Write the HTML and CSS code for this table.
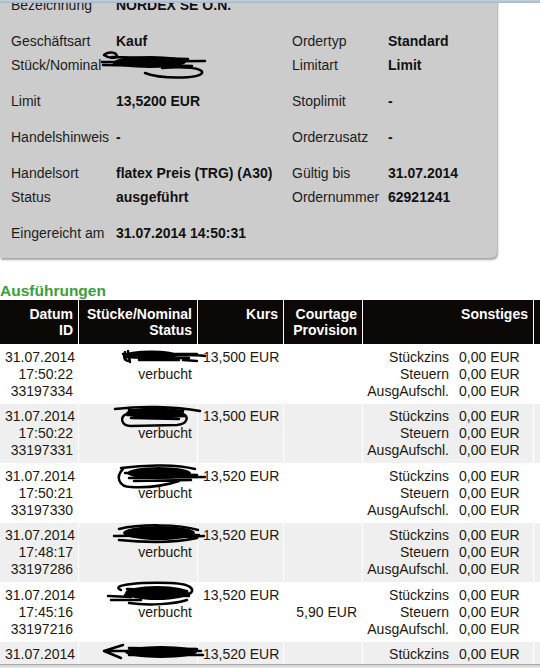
FILE: index.html
```html
<!DOCTYPE html>
<html lang="de">
<head>
<meta charset="utf-8">
<title>Order</title>
<link rel="stylesheet" href="styles.css">
</head>
<body>
<div class="topstrip"></div>

<div class="order">
  <div class="grp">
    <div class="lbl">Bezeichnung</div><div class="val wide">NORDEX SE O.N.</div>
  </div>
  <div class="grp">
    <div class="lbl">Geschäftsart</div><div class="val">Kauf</div>
    <div class="lbl">Ordertyp</div><div class="val">Standard</div>
    <div class="lbl">Stück/Nominal</div>
    <div class="val redacted">
      <svg class="scrib box-scrib" viewBox="0 0 110 36">
        <ellipse class="blob" cx="50" cy="14" rx="36" ry="6"/>
        <path d="M4 7 C 8 3, 16 4, 17 8 C 16 11, 8 10, 4 7 M2 14 L 105 13 M3 17 L 60 18 M12 9 L 88 11 L 14 16 L 92 18 M45 25 C 60 31, 98 31, 102 25 C 104 20, 84 18, 62 20"/>
      </svg>
    </div>
    <div class="lbl">Limitart</div><div class="val">Limit</div>
  </div>
  <div class="grp">
    <div class="lbl">Limit</div><div class="val">13,5200 EUR</div>
    <div class="lbl">Stoplimit</div><div class="val">-</div>
  </div>
  <div class="grp">
    <div class="lbl">Handelshinweis</div><div class="val">-</div>
    <div class="lbl">Orderzusatz</div><div class="val">-</div>
  </div>
  <div class="grp">
    <div class="lbl">Handelsort</div><div class="val">flatex Preis (TRG) (A30)</div>
    <div class="lbl">Gültig bis</div><div class="val">31.07.2014</div>
    <div class="lbl">Status</div><div class="val">ausgeführt</div>
    <div class="lbl">Ordernummer</div><div class="val">62921241</div>
  </div>
  <div class="grp">
    <div class="lbl">Eingereicht am</div><div class="val wide">31.07.2014 14:50:31</div>
  </div>
</div>

<h2 class="section">Ausführungen</h2>

<table class="exec">
  <colgroup>
    <col class="c-date"><col class="c-pcs"><col class="c-kurs"><col class="c-court"><col class="c-fees"><col class="c-more">
  </colgroup>
  <thead>
    <tr>
      <th>Datum<br>ID</th>
      <th>Stücke/Nominal<br>Status</th>
      <th>Kurs</th>
      <th>Courtage<br>Provision</th>
      <th>Sonstiges</th>
      <th></th>
    </tr>
  </thead>
  <tbody>
    <tr>
      <td>31.07.2014<br>17:50:22<br>33197334</td>
      <td class="pcs">&nbsp;<br>verbucht
        <svg class="scrib" viewBox="0 0 130 60">
          <ellipse class="blob" cx="72" cy="11" rx="26" ry="4.5"/>
          <path d="M46 8 C 44 12, 45 17, 50 17 M49 7 L 51 18 M44 10 L 118 10 L 46 13 L 110 14 M60 16 L 100 16 M100 11 C 110 11, 120 11, 126 12 M104 16 L 118 17"/>
        </svg>
      </td>
      <td>13,500 EUR</td>
      <td></td>
      <td class="fees"><div class="fgrid"><span>Stückzins</span><span>0,00 EUR</span><span>Steuern</span><span>0,00 EUR</span><span>AusgAufschl.</span><span>0,00 EUR</span></div></td>
      <td></td>
    </tr>
    <tr>
      <td>31.07.2014<br>17:50:22<br>33197331</td>
      <td class="pcs">&nbsp;<br>verbucht
        <svg class="scrib" viewBox="0 0 130 60">
          <ellipse class="blob" cx="76" cy="9" rx="29" ry="5.5"/>
          <path d="M36 5 C 60 2, 95 2, 121 7 M48 10 C 40 12, 42 22, 52 22 L 98 21 C 109 20, 110 12, 104 10 M50 6 L 104 7 L 48 11 L 106 12 L 52 14 L 100 15"/>
        </svg>
      </td>
      <td>13,500 EUR</td>
      <td></td>
      <td class="fees"><div class="fgrid"><span>Stückzins</span><span>0,00 EUR</span><span>Steuern</span><span>0,00 EUR</span><span>AusgAufschl.</span><span>0,00 EUR</span></div></td>
      <td></td>
    </tr>
    <tr>
      <td>31.07.2014<br>17:50:21<br>33197330</td>
      <td class="pcs">&nbsp;<br>verbucht
        <svg class="scrib" viewBox="0 0 130 60">
          <ellipse class="blob" cx="80" cy="10" rx="32" ry="6"/>
          <path d="M42 5 C 70 1, 100 2, 116 6 M44 6 C 36 14, 40 24, 52 24 C 70 25, 88 22, 100 18 M46 10 L 118 12 L 50 15 L 126 14 M55 18 L 112 17"/>
        </svg>
      </td>
      <td>13,520 EUR</td>
      <td></td>
      <td class="fees"><div class="fgrid"><span>Stückzins</span><span>0,00 EUR</span><span>Steuern</span><span>0,00 EUR</span><span>AusgAufschl.</span><span>0,00 EUR</span></div></td>
      <td></td>
    </tr>
    <tr>
      <td>31.07.2014<br>17:48:17<br>33197286</td>
      <td class="pcs">&nbsp;<br>verbucht
        <svg class="scrib" viewBox="0 0 130 60">
          <ellipse class="blob" cx="80" cy="10" rx="36" ry="7"/>
          <path d="M40 6 C 60 1, 100 1, 119 7 M35 13 L 120 12 M40 17 C 70 20, 100 19, 118 15 M100 14 L 125 13"/>
        </svg>
      </td>
      <td>13,520 EUR</td>
      <td></td>
      <td class="fees"><div class="fgrid"><span>Stückzins</span><span>0,00 EUR</span><span>Steuern</span><span>0,00 EUR</span><span>AusgAufschl.</span><span>0,00 EUR</span></div></td>
      <td></td>
    </tr>
    <tr>
      <td>31.07.2014<br>17:45:16<br>33197216</td>
      <td class="pcs">&nbsp;<br>verbucht
        <svg class="scrib" viewBox="0 0 130 60">
          <ellipse class="blob" cx="78" cy="11" rx="32" ry="7"/>
          <path d="M42 8 C 30 3, 60 0, 92 1 C 116 2, 118 10, 106 14 M29 14 L 52 15 M32 18 L 62 18 M50 21 C 70 24, 95 22, 108 18 M48 7 L 108 9 L 46 13 L 110 14"/>
        </svg>
      </td>
      <td>13,520 EUR</td>
      <td><br>5,90 EUR</td>
      <td class="fees"><div class="fgrid"><span>Stückzins</span><span>0,00 EUR</span><span>Steuern</span><span>0,00 EUR</span><span>AusgAufschl.</span><span>0,00 EUR</span></div></td>
      <td></td>
    </tr>
    <tr>
      <td>31.07.2014<br>17:45:16<br>33197215</td>
      <td class="pcs">&nbsp;<br>verbucht
        <svg class="scrib" viewBox="0 0 130 60">
          <ellipse class="blob" cx="82" cy="10" rx="36" ry="6"/>
          <path d="M25 9 L 44 3 M25 9 L 42 16 M25 9 L 122 9 M50 6 L 118 7 M50 13 L 124 13"/>
        </svg>
      </td>
      <td>13,520 EUR</td>
      <td></td>
      <td class="fees"><div class="fgrid"><span>Stückzins</span><span>0,00 EUR</span><span>Steuern</span><span>0,00 EUR</span><span>AusgAufschl.</span><span>0,00 EUR</span></div></td>
      <td></td>
    </tr>
  </tbody>
</table>

<div class="bottombar"></div>
</body>
</html>
```

FILE: styles.css
```css
html, body {
  margin: 0;
  padding: 0;
  overflow: hidden;
  background: #ffffff;
}

body {
  font-family: "Liberation Sans", Arial, sans-serif;
  font-size: 14px;
  color: #1c1c1c;
}

.topstrip {
  position: fixed;
  top: 0;
  left: 0;
  right: 0;
  height: 3px;
  background: linear-gradient(#c6d2dd, #a3b4c4);
  z-index: 10;
}

.bottombar {
  position: fixed;
  bottom: 0;
  left: 0;
  right: 0;
  height: 4px;
  background: linear-gradient(#8e8e8e, #d4d4d4 35%, #e6e6e6);
  z-index: 10;
}

/* order details box */
.order {
  box-sizing: border-box;
  width: 497px;
  margin-top: -7px;
  padding: 0 0 13px 11px;
  background: #cccccc;
  border-radius: 0 0 6px 0;
  box-shadow: 1px 2px 2px rgba(0, 0, 0, 0.35);
  display: flex;
  flex-direction: column;
  gap: 12px;
}

.grp {
  display: grid;
  grid-template-columns: 105px 176px 96px auto;
  grid-auto-rows: 24px;
  line-height: 24px;
  white-space: nowrap;
}

.lbl {
  color: #1c1c1c;
}

.val {
  font-weight: bold;
  color: #111111;
}

.val.wide {
  grid-column: 2 / span 3;
}

.redacted {
  position: relative;
}

.scrib {
  position: absolute;
  left: 0;
  top: 0;
  width: 130px;
  height: 60px;
  overflow: visible;
  fill: none;
  stroke: #000000;
  stroke-width: 2.5;
  stroke-linecap: round;
  stroke-linejoin: round;
}

.scrib .blob {
  fill: #000000;
  stroke: none;
}

.scrib.box-scrib {
  left: -16px;
  top: -5px;
  width: 110px;
  height: 36px;
}

/* section heading */
.section {
  margin: 24px 0 0 0;
  font-size: 15.5px;
  line-height: 18px;
  font-weight: bold;
  color: #38a038;
}

/* executions table */
.exec {
  table-layout: fixed;
  width: 594px;
  border-collapse: separate;
  border-spacing: 0;
  font-size: 14px;
}

.c-date { width: 79px; }
.c-pcs { width: 119px; }
.c-kurs { width: 86px; }
.c-court { width: 79px; }
.c-fees { width: 171px; }
.c-more { width: 60px; }

.exec th {
  box-sizing: border-box;
  background: #0c0805;
  color: #ffffff;
  font-weight: bold;
  line-height: 16px;
  padding: 6px 5px;
  text-align: right;
  vertical-align: top;
  border-right: 1px solid #ffffff;
  white-space: nowrap;
}

.exec td {
  box-sizing: border-box;
  line-height: 17px;
  padding: 4.5px 5px 4px 5px;
  text-align: right;
  vertical-align: top;
  border-right: 1px solid #ffffff;
  white-space: nowrap;
  color: #22180f;
}

.exec tbody tr:nth-child(even) td {
  background: #efefef;
}

.exec td.pcs {
  position: relative;
}

.exec td.fees {
  padding-left: 0;
}

.fgrid {
  display: grid;
  grid-template-columns: 1fr 69px;
  column-gap: 10px;
}

.fgrid span:nth-child(odd) {
  text-align: right;
}

.fgrid span:nth-child(even) {
  text-align: left;
}
```
